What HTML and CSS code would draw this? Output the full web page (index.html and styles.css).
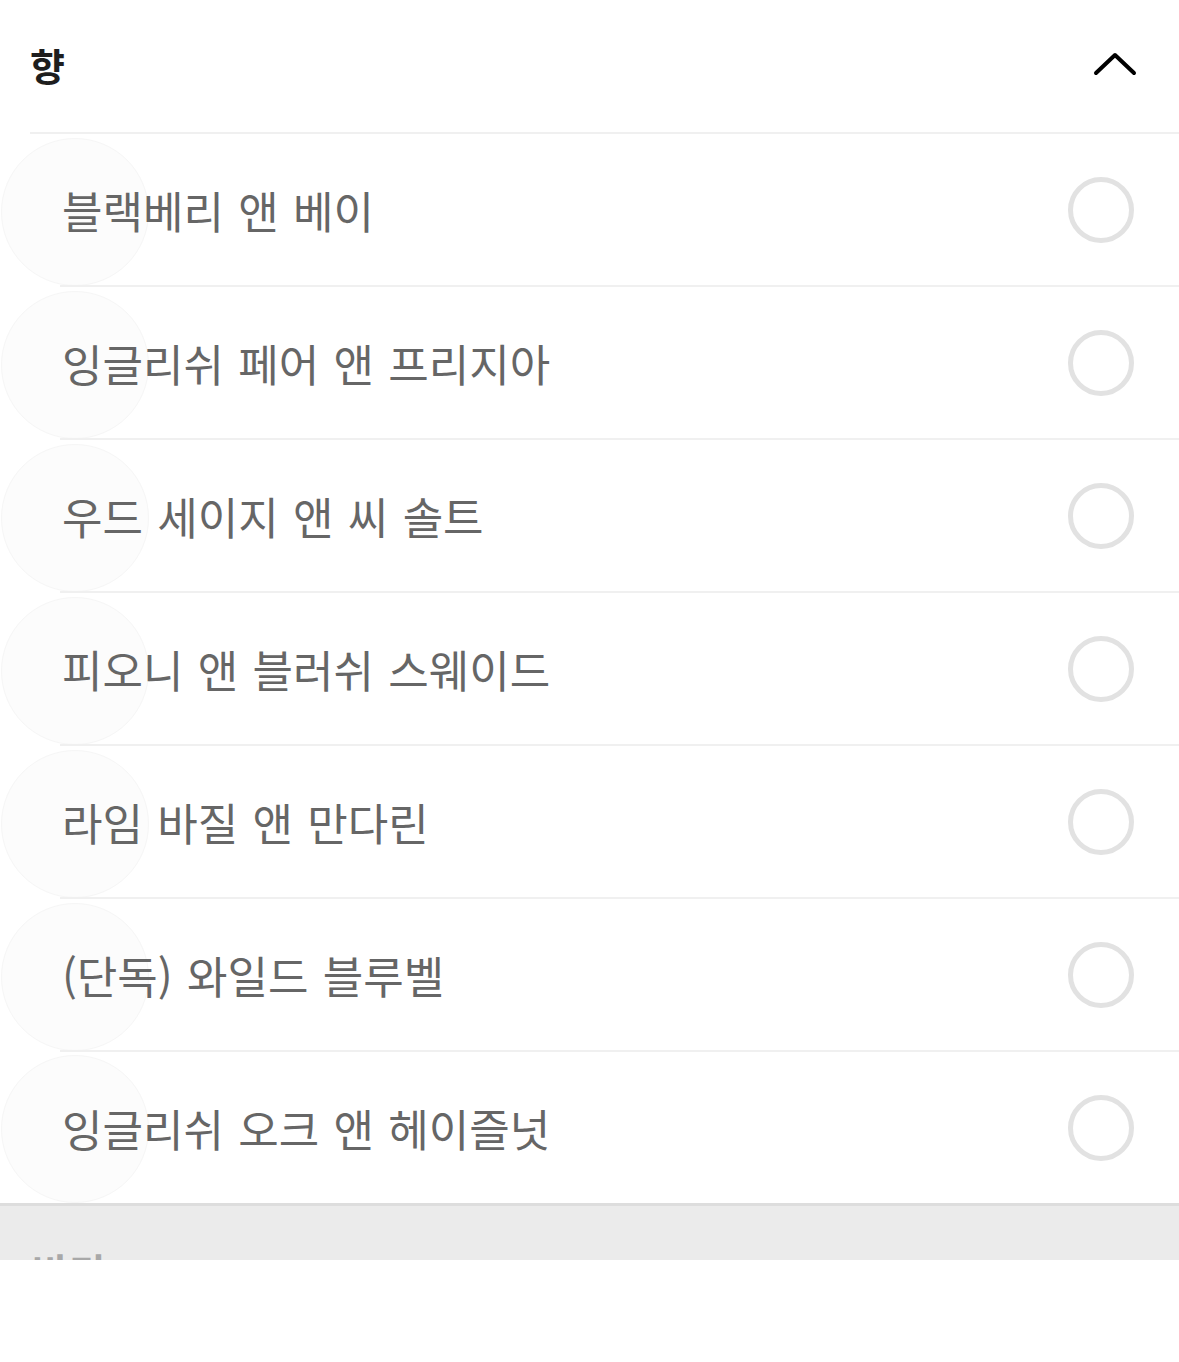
FILE: index.html
```html
<!DOCTYPE html>
<html lang="ko">
<head>
    <meta charset="UTF-8">
    <meta name="viewport" content="width=device-width, initial-scale=1.0">
    <title>향 선택</title>
    <link rel="stylesheet" href="styles.css">
</head>
<body>
    <div class="panel">
        <div class="panel-header">
            <h2>향</h2>
            <svg class="chevron" width="44" height="26" viewBox="0 0 44 26">
                <polyline points="3,22 22,4 41,22" fill="none" stroke="#000" stroke-width="4" stroke-linecap="round" stroke-linejoin="round"/>
            </svg>
        </div>
        <ul class="options">
            <li class="option"><div class="option-inner"><span>블랙베리 앤 베이</span><i class="radio"></i></div></li>
            <li class="option"><div class="option-inner"><span>잉글리쉬 페어 앤 프리지아</span><i class="radio"></i></div></li>
            <li class="option"><div class="option-inner"><span>우드 세이지 앤 씨 솔트</span><i class="radio"></i></div></li>
            <li class="option"><div class="option-inner"><span>피오니 앤 블러쉬 스웨이드</span><i class="radio"></i></div></li>
            <li class="option"><div class="option-inner"><span>라임 바질 앤 만다린</span><i class="radio"></i></div></li>
            <li class="option"><div class="option-inner"><span>(단독) 와일드 블루벨</span><i class="radio"></i></div></li>
            <li class="option last"><div class="option-inner"><span>잉글리쉬 오크 앤 헤이즐넛</span><i class="radio"></i></div></li>
        </ul>
        <div class="next-section">
            <span>바디</span>
        </div>
    </div>
</body>
</html>
```

FILE: styles.css
```css
body {
    margin: 0;
    padding: 0;
    background: #fff;
    font-family: "Noto Sans CJK KR", "Noto Sans", sans-serif;
}
.panel {
    width: 1179px;
}
.panel-header {
    height: 132px;
    margin-left: 30px;
    padding-right: 42px;
    display: flex;
    align-items: center;
    justify-content: space-between;
    border-bottom: 2px solid #f0f0f0;
}
.panel-header h2 {
    margin: 0;
    font-size: 38px;
    font-weight: 700;
    color: #1e1e1e;
    line-height: 1;
    margin-top: -2px;
}
.chevron {
    display: block;
    margin-top: -4px;
}
.options {
    list-style: none;
    margin: 0;
    padding: 0;
}
.option {
    position: relative;
    padding-left: 60px;
}
.option::before {
    content: "";
    position: absolute;
    left: 1px;
    top: 50%;
    width: 146px;
    height: 146px;
    margin-top: -73px;
    border-radius: 50%;
    background: #fcfcfc;
    border: 1px solid #f6f6f6;
}
.option-inner {
    position: relative;
    height: 151px;
    display: flex;
    align-items: center;
    justify-content: space-between;
    padding-right: 45px;
    border-bottom: 2px solid #f0f0f0;
}
.option.last .option-inner {
    height: 151px;
    border-bottom: none;
}
.option-inner span {
    padding-left: 2px;
    font-size: 44px;
    word-spacing: 2px;
    color: #666;
    line-height: 1;
}
.radio {
    display: block;
    width: 56px;
    height: 56px;
    border-radius: 50%;
    border: 5px solid #e2e2e2;
}
.next-section {
    height: 54px;
    overflow: hidden;
    background: #ebebeb;
    border-top: 3px solid #dddddd;
    padding-left: 32px;
}
.next-section span {
    display: block;
    padding-top: 45px;
    font-size: 40px;
    line-height: 40px;
    font-weight: 700;
    color: #a8a8a8;
}
```
